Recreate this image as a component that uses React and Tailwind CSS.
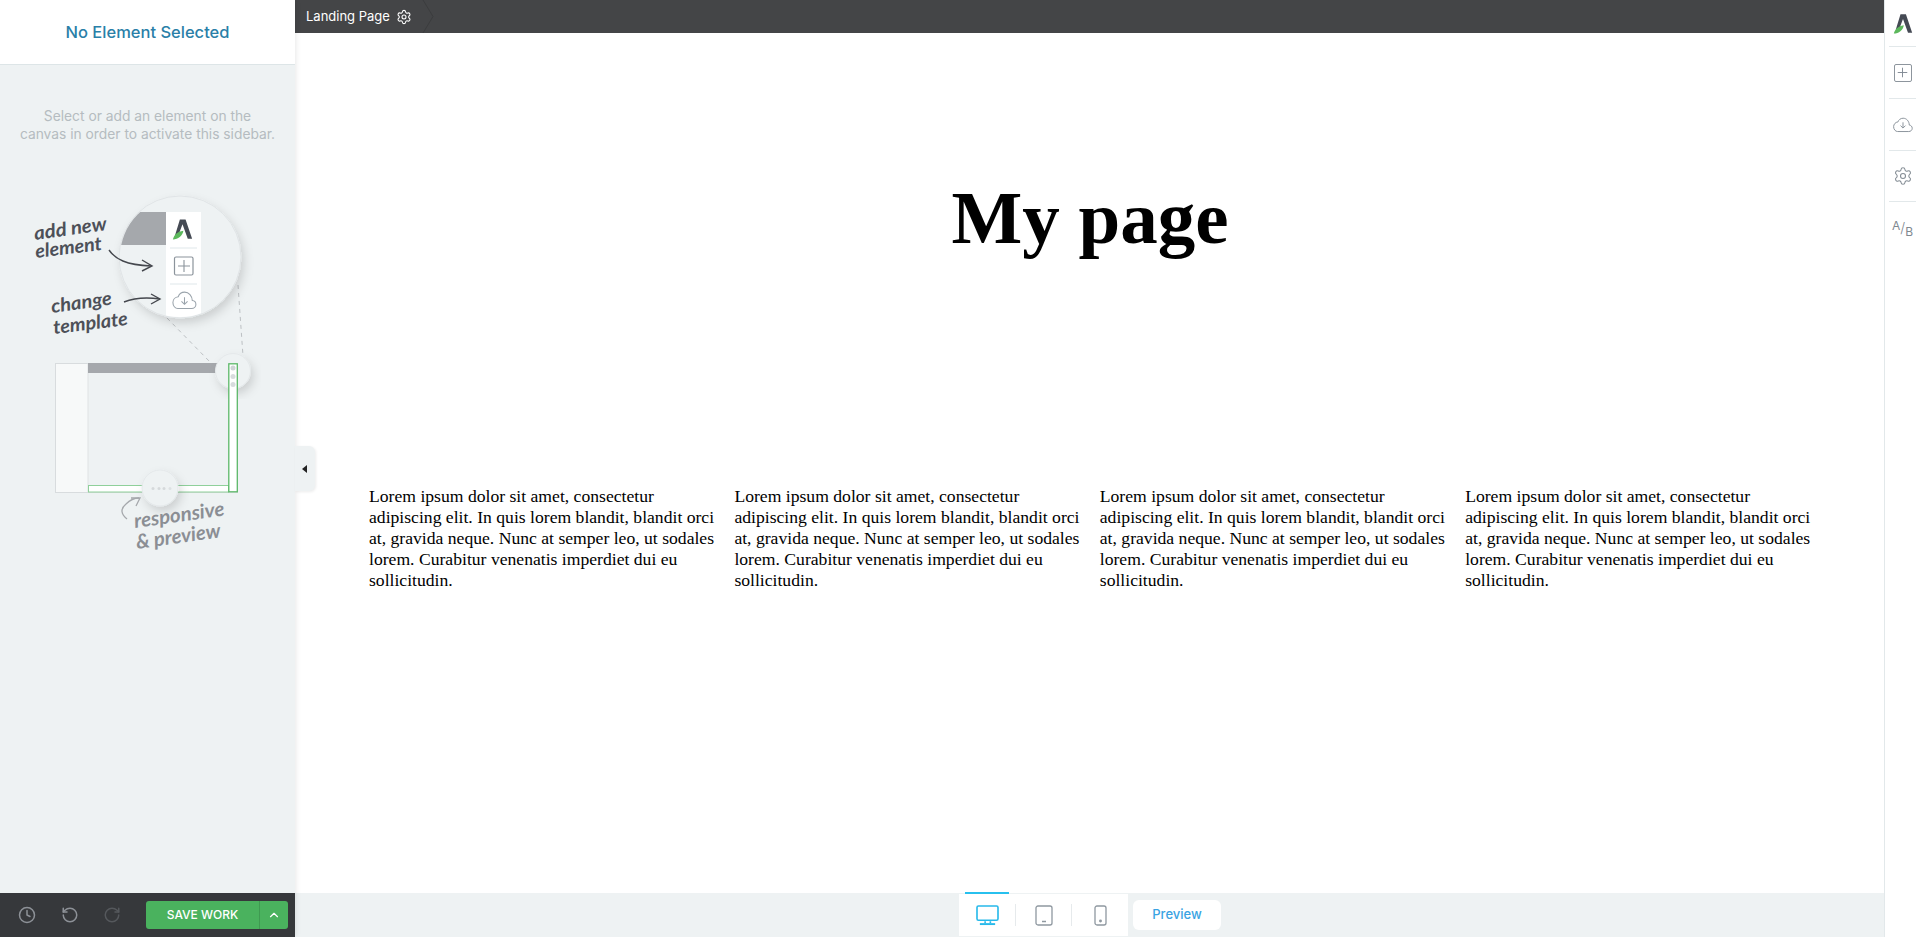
import React from "react";
import { Clock, RotateCcw, RotateCw, ChevronUp, Settings, Plus } from "lucide-react";

const LOREM = "Lorem ipsum dolor sit amet, consectetur adipiscing elit. In quis lorem blandit, blandit orci at, gravida neque. Nunc at semper leo, ut sodales lorem. Curabitur venenatis imperdiet dui eu sollicitudin.";

const LOGO_A = "M9 1h6.500L23 23h-5L12 6.500 8 17l-4.500 2z";
const LOGO_LEAF = "M1 24c1-5 5-9 12-10-1 6-6 10-12 10z";
const CLOUD = "M6 18.500h14.500c2.500 0 4.500-1.800 4.500-4.200 0-2.300-1.700-4-3.800-4.200C21 5 17.600 1.200 13.200 1.200 9.800 1.200 7.400 3.200 6.400 6 3.200 6.300.8 9 .8 12.200c0 3.400 2.300 6.300 5.200 6.300z";

function Logo({ className }) {
  return (
    <svg viewBox="0 0 24 24" className={className}>
      <path d={LOGO_A} fill="#454a54" />
      <path d={LOGO_LEAF} fill="#5cb85c" />
    </svg>
  );
}

function CloudDown({ className }) {
  return (
    <svg viewBox="0 0 26 20" fill="none" stroke="#8d959d" strokeWidth="1.300" className={className}>
      <path d={CLOUD} />
      <path d="M13 6.500v7M9.800 10.800l3.200 3.200 3.200-3.200" />
    </svg>
  );
}

function Illustration() {
  const hand = { fontFamily: "Lato, sans-serif", fontStyle: "italic", fontWeight: 700 };
  return (
    <svg width="295" height="400" viewBox="0 180 295 400" className="block">
      <defs>
        <filter id="sh" x="-30%" y="-30%" width="160%" height="160%">
          <feDropShadow dx="3" dy="5" stdDeviation="5" floodColor="#000" floodOpacity="0.14" />
        </filter>
        <clipPath id="big"><circle cx="180" cy="257" r="60" /></clipPath>
      </defs>
      <line x1="167" y1="318" x2="211" y2="363" stroke="#bcc0c3" strokeWidth="1" strokeDasharray="4 4" />
      <line x1="238" y1="285" x2="243" y2="356" stroke="#bcc0c3" strokeWidth="1" strokeDasharray="4 4" />
      <circle cx="180" cy="257" r="61" fill="#eef2f3" stroke="#e0e4e6" strokeWidth="1" filter="url(#sh)" />
      <g clipPath="url(#big)">
        <rect x="110" y="212" width="56" height="33" fill="#a5a8ac" />
        <rect x="166" y="212" width="35" height="110" fill="#ffffff" />
        <line x1="170" y1="248" x2="197" y2="248" stroke="#dfe7ea" />
        <line x1="170" y1="284" x2="197" y2="284" stroke="#dfe7ea" />
      </g>
      <svg x="172" y="218" width="21" height="22" viewBox="0 0 24 24">
        <path d={LOGO_A} fill="#454a54" />
        <path d={LOGO_LEAF} fill="#5cb85c" />
      </svg>
      <rect x="174.500" y="257" width="18.500" height="18" rx="1.500" fill="none" stroke="#8c949c" strokeWidth="1.200" />
      <path d="M178 266h12M184 260v12" stroke="#8c949c" strokeWidth="1.100" fill="none" />
      <svg x="172" y="291" width="25" height="19" viewBox="0 0 26 20" fill="none" stroke="#9aa3ab" strokeWidth="1.100">
        <path d={CLOUD} />
        <path d="M13 6.500v7M9.800 10.800l3.200 3.200 3.200-3.200" />
      </svg>

      <text x="35" y="240" fontSize="19" textLength="73" lengthAdjust="spacingAndGlyphs" fill="#4d5058" transform="rotate(-8 35 240)" style={hand}>add new</text>
      <text x="36" y="258" fontSize="19" textLength="67" lengthAdjust="spacingAndGlyphs" fill="#4d5058" transform="rotate(-7 36 258)" style={hand}>element</text>
      <path d="M109 250c6 9 17 15 42 16" fill="none" stroke="#45484e" strokeWidth="1.400" />
      <path d="M142 260l10 6-10 5" fill="none" stroke="#45484e" strokeWidth="1.400" />
      <text x="52" y="313" fontSize="19" textLength="61" lengthAdjust="spacingAndGlyphs" fill="#4d5058" transform="rotate(-8 52 313)" style={hand}>change</text>
      <text x="54" y="334" fontSize="19" textLength="75" lengthAdjust="spacingAndGlyphs" fill="#4d5058" transform="rotate(-7 54 334)" style={hand}>template</text>
      <path d="M124 302c10-4 22-5 36-3" fill="none" stroke="#45484e" strokeWidth="1.400" />
      <path d="M151 294l9 5-9 5" fill="none" stroke="#45484e" strokeWidth="1.400" />

      <rect x="55.500" y="363.500" width="182" height="129" fill="none" stroke="#d8dcde" />
      <rect x="56" y="364" width="32" height="128" fill="#f7f9f9" />
      <line x1="88" y1="363" x2="88" y2="492" stroke="#dfe2e4" />
      <rect x="88" y="363" width="141" height="10" fill="#a5a8ac" />
      <rect x="88.500" y="485.500" width="140" height="6.500" fill="#fff" stroke="#8fd09a" strokeWidth="1" />

      <circle cx="233" cy="371" r="17.500" fill="#eef2f3" stroke="#e4e8ea" filter="url(#sh)" />
      <rect x="228.800" y="363.800" width="8.500" height="128" fill="#fff" stroke="#5cb868" strokeWidth="1.300" />
      <circle cx="233" cy="368" r="2.500" fill="#cfd3d6" />
      <circle cx="233" cy="376.500" r="2.500" fill="#d8dcde" />
      <circle cx="233" cy="384.500" r="2.500" fill="#d8dcde" />
      <circle cx="160" cy="488" r="18" fill="#eef2f3" stroke="#e4e8ea" filter="url(#sh)" />
      <circle cx="153" cy="488.500" r="1.500" fill="#d5d9db" />
      <circle cx="159" cy="488.500" r="1.500" fill="#d5d9db" />
      <circle cx="164" cy="488.500" r="1.500" fill="#d5d9db" />
      <circle cx="170" cy="488.500" r="1.500" fill="#dde1e3" />

      <path d="M127 519c-6-5-7-10-1-15 4-4 9-6 13-6" fill="none" stroke="#a5a8ac" strokeWidth="1.300" />
      <path d="M131 498h9l-4 8" fill="none" stroke="#a5a8ac" strokeWidth="1.300" />
      <text x="135" y="528" fontSize="20" textLength="91" lengthAdjust="spacingAndGlyphs" fill="#8b8e94" transform="rotate(-8 135 528)" style={hand}>responsive</text>
      <text x="137" y="549" fontSize="20" textLength="85" lengthAdjust="spacingAndGlyphs" fill="#8b8e94" transform="rotate(-8 137 549)" style={hand}>&amp; preview</text>
    </svg>
  );
}

function Sidebar() {
  return (
    <aside className="w-[295px] shrink-0 h-full flex flex-col bg-[#eef2f3] relative z-10 shadow-[0_0_6px_rgba(0,0,0,0.12)]">
      <div className="h-[65px] shrink-0 bg-white border-b border-[#dde5e7] flex items-center justify-center">
        <h2 className="text-[16.5px] font-medium text-[#2a7fa8] [font-family:Inter,sans-serif]">No Element Selected</h2>
      </div>
      <div className="flex-1 min-h-0">
        <p className="pt-[43px] text-center text-[13.8px] leading-[17.5px] text-[#b5bcc0] [font-family:Inter,sans-serif]">
          Select or add an element on the<br />canvas in order to activate this sidebar.
        </p>
        <div className="mt-[37px]"><Illustration /></div>
      </div>
      <div className="h-[44px] shrink-0 bg-[#36383b] flex items-center pl-[18px] pr-[7px]">
        <Clock size={18} strokeWidth={2} color="#8d9197" />
        <RotateCcw size={18} strokeWidth={2} color="#8d9197" className="ml-[25px]" />
        <RotateCw size={18} strokeWidth={2} color="#55585c" className="ml-[24px]" />
        <div className="ml-auto flex w-[142px] h-[28px] rounded-[3px] bg-[#4ab25e] text-white">
          <span className="w-[114px] flex items-center justify-center text-[12px] font-medium [font-family:Inter,sans-serif] border-r border-[#3f9a51]">SAVE WORK</span>
          <span className="flex-1 flex items-center justify-center"><ChevronUp size={14} /></span>
        </div>
      </div>
      <button className="absolute left-full top-[446px] w-[20px] h-[45px] bg-[#eef2f3] rounded-r-[6px] flex items-center shadow-[1px_1px_3px_rgba(0,0,0,0.08)]">
        <span className="ml-[7px] border-y-[4px] border-y-transparent border-r-[5px] border-r-[#222]"></span>
      </button>
    </aside>
  );
}

function TopBar() {
  return (
    <div className="h-[33px] shrink-0 bg-[#444547] flex items-center relative overflow-hidden">
      <div className="flex items-center pl-[11px] text-[13px] text-white [font-family:Inter,sans-serif]">
        <span>Landing Page</span>
        <Settings size={16} strokeWidth={1.6} className="ml-[6px]" />
      </div>
      <svg width="12" height="33" viewBox="0 0 12 33" className="ml-[10px]">
        <path d="M1 0l10 16.500L1 33" fill="none" stroke="#3b3c3e" strokeWidth="1" />
      </svg>
    </div>
  );
}

function Bottom() {
  return (
    <div className="h-[44px] shrink-0 bg-[#eef2f3] flex justify-center items-stretch pl-[1px]">
      <div className="w-[169px] bg-white relative flex items-center my-px">
        <span className="absolute -top-[2px] left-[6px] w-[44px] h-[2px] bg-[#27c0ee]"></span>
        <span className="w-[56px] flex justify-center pl-[1px]">
          <svg viewBox="0 0 24 22" width="23" height="21" fill="none" stroke="#27b9ea" strokeWidth="1.700">
            <rect x="1" y="1" width="22" height="15" rx="1.500" />
            <path d="M9.500 17v2M15 17v2" />
            <path d="M4 20h16" strokeWidth="2" />
          </svg>
        </span>
        <span className="w-px h-[22px] bg-[#e6eaec]"></span>
        <span className="w-[55px] flex justify-center">
          <svg viewBox="0 0 18 21" width="18" height="21" fill="none" stroke="#8f98a0" strokeWidth="1.300">
            <rect x="1" y="1" width="16" height="19" rx="2" />
            <path d="M7 16.500h4" strokeWidth="1.500" />
          </svg>
        </span>
        <span className="w-px h-[22px] bg-[#e6eaec]"></span>
        <span className="w-[56px] flex justify-center">
          <svg viewBox="0 0 13 21" width="13" height="21" fill="none" stroke="#8f98a0" strokeWidth="1.300">
            <rect x="1" y="1" width="11" height="19" rx="2" />
            <circle cx="6.500" cy="16" r="0.800" fill="#8f98a0" />
          </svg>
        </span>
      </div>
      <button className="ml-[5px] mt-[7px] mb-[7px] w-[88px] h-[30px] bg-white rounded-[6px] text-[13px] font-medium text-[#3aa3e3] [font-family:Inter,sans-serif]">Preview</button>
    </div>
  );
}

function RightRail() {
  const row = "mx-[4px] flex items-center justify-center border-b border-[#e2e8ea]";
  return (
    <div className="w-[36px] shrink-0 h-full bg-white border-l border-[#e2e8ea]">
      <div className={`h-[47px] ${row}`}><Logo className="w-[20px] h-[21px]" /></div>
      <div className={`h-[52px] ${row}`}>
        <span className="flex items-center justify-center w-[18px] h-[18px] border border-[#8d959d] rounded-[2px]">
          <Plus size={15} strokeWidth={1.500} color="#7f8892" />
        </span>
      </div>
      <div className={`h-[52px] ${row}`}><CloudDown className="w-[20px] h-[16px]" /></div>
      <div className={`h-[51px] ${row}`}><Settings size={20} strokeWidth={1.300} color="#858d95" /></div>
      <div className="h-[52px] mx-[4px] flex items-center justify-center">
        <span className="text-[12px] leading-none text-[#7f8890] [font-family:Inter,sans-serif]"><span className="relative -top-[3px]">A</span><span className="relative text-[14px] font-light">/</span><span className="relative top-[3px]">B</span></span>
      </div>
    </div>
  );
}

export default function App() {
  return (
    <div className="w-[1920px] h-[937px] flex overflow-hidden bg-white">
      <Sidebar />
      <main className="flex-1 min-w-0 h-full flex flex-col">
        <TopBar />
        <div className="flex-1 min-h-0 bg-white [font-family:'Liberation_Serif',serif] text-black pl-[74px]">
          <h1 className="text-[75px] font-bold leading-[86px] text-center -ml-[73px] mt-[142px]">My page</h1>
          <div className="grid grid-cols-[365.4px_365.4px_365.4px_365.4px] mt-[225px]">
            {[0, 1, 2, 3].map((i) => (
              <p key={i} className="text-[17.64px] leading-[21px] w-[350px]">{LOREM}</p>
            ))}
          </div>
        </div>
        <Bottom />
      </main>
      <RightRail />
    </div>
  );
}
